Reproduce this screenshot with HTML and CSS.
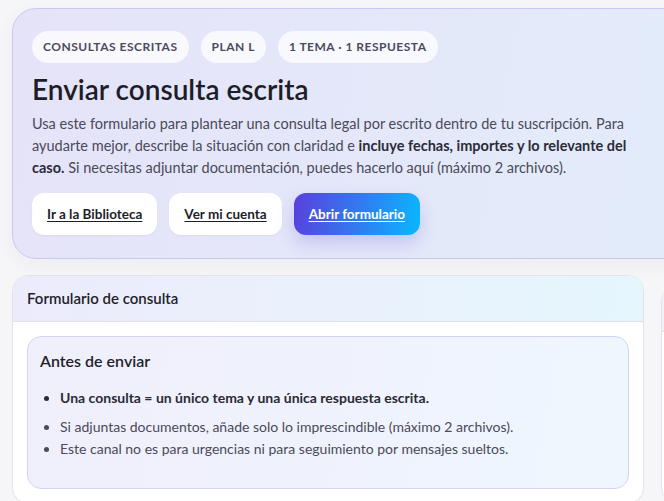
FILE: index.html
```html
<!DOCTYPE html>
<html lang="es">
<head>
    <meta charset="UTF-8">
    <meta name="viewport" content="width=device-width, initial-scale=1.0">
    <title>Enviar consulta escrita</title>
    <link rel="stylesheet" href="styles.css">
</head>
<body>
    <div class="page">
        <section class="hero">
            <div class="chips">
                <span class="chip">Consultas escritas</span>
                <span class="chip">Plan L</span>
                <span class="chip">1 tema · 1 respuesta</span>
            </div>
            <h1>Enviar consulta escrita</h1>
            <p class="intro">
                Usa este formulario para plantear una consulta legal por escrito dentro de tu suscripción. Para
                ayudarte mejor, describe la situación con claridad e <strong>incluye fechas, importes y lo relevante del
                caso.</strong> Si necesitas adjuntar documentación, puedes hacerlo aquí (máximo 2 archivos).
            </p>
            <div class="actions">
                <a class="btn" href="#">Ir a la Biblioteca</a>
                <a class="btn" href="#">Ver mi cuenta</a>
                <a class="btn btn-primary" href="#">Abrir formulario</a>
            </div>
        </section>

        <div class="columns">
            <section class="card">
                <div class="card-head">Formulario de consulta</div>
                <div class="card-body">
                    <div class="notice">
                        <h2>Antes de enviar</h2>
                        <ul>
                            <li class="key">Una consulta = un único tema y una única respuesta escrita.</li>
                            <li>Si adjuntas documentos, añade solo lo imprescindible (máximo 2 archivos).</li>
                            <li>Este canal no es para urgencias ni para seguimiento por mensajes sueltos.</li>
                        </ul>
                    </div>
                </div>
            </section>
            <!-- side column, only its edge shows at this width -->
            <aside class="card side">
                <div class="card-head"></div>
            </aside>
        </div>
    </div>
</body>
</html>
```

FILE: styles.css
```css
html, body {
    overflow: hidden;
}
body {
    margin: 0;
    font-family: Lato, "Noto Sans", sans-serif;
    background-color: #f6f6f8;
    color: #1f1f2b;
}
.page {
    width: 1000px;
    padding: 8px 12px;
}

/* hero */
.hero {
    padding: 22px 20px 23px 19px;
    border: 1px solid #cbc8f1;
    border-radius: 24px;
    background: linear-gradient(100deg, #e5e3f8 0%, #e3ebfa 60%, #e4eefb 100%);
    box-shadow: 0 6px 18px rgba(90, 80, 160, 0.06);
}
.chips {
    display: flex;
    gap: 12px;
}
.chip {
    padding: 0 11px;
    height: 32px;
    line-height: 32px;
    border-radius: 16px;
    background-color: rgba(255, 255, 255, 0.75);
    font-size: 12px;
    font-weight: 700;
    letter-spacing: 0.5px;
    text-transform: uppercase;
    color: #4b4b5c;
}
.hero h1 {
    margin: 8px 0 6px;
    font-size: 28px;
    font-weight: 600;
    line-height: 36px;
    color: #1d1d28;
}
.intro {
    max-width: 600px;
    margin: 0;
    font-size: 14.5px;
    line-height: 22px;
    color: #4a4a58;
}
.intro strong {
    color: #2c2c38;
}
.actions {
    display: flex;
    gap: 12px;
    margin-top: 14px;
}
.btn {
    display: inline-block;
    padding: 0 15px;
    height: 42px;
    line-height: 42px;
    border-radius: 12px;
    background-color: #fff;
    font-size: 13.5px;
    font-weight: 700;
    color: #1e1e2a;
    text-decoration: underline;
    text-underline-offset: 2px;
    box-shadow: 0 1px 2px rgba(40, 40, 80, 0.05);
}
.btn-primary {
    background: linear-gradient(100deg, #5a3fdc 0%, #2f7ff0 55%, #08b8ff 100%);
    color: #fff;
    box-shadow: 0 8px 18px rgba(80, 70, 210, 0.22);
}

/* lower columns */
.columns {
    display: grid;
    grid-template-columns: 632px 1fr;
    gap: 17px;
    margin-top: 16px;
}
.card {
    border: 1px solid #e2e2ec;
    border-radius: 16px;
    background-color: #fff;
    overflow: hidden;
}
.side {
    margin-top: 10px;
}
.card-head {
    padding: 0 14px;
    height: 45px;
    line-height: 45px;
    border-bottom: 1px solid #e0e0ee;
    background: linear-gradient(100deg, #ecebfb 0%, #e9f2fc 60%, #e5f6fd 100%);
    font-size: 15px;
    font-weight: 600;
    color: #1f1f2b;
}
.side .card-head {
    background: #f1f1f6;
}
.card-body {
    padding: 14px 14px;
}
.notice {
    padding: 14px 12px 28px;
    border: 1px solid #d6d2f2;
    border-radius: 14px;
    background: linear-gradient(100deg, #f0effc 0%, #eff3fd 60%, #eef7fe 100%);
}
.notice h2 {
    margin: 0 0 17px;
    font-size: 16px;
    font-weight: 600;
}
.notice ul {
    margin: 0;
    padding-left: 20px;
    font-size: 14px;
    line-height: 22px;
    color: #4a4a58;
}
.notice li.key {
    margin-bottom: 7px;
    font-weight: 700;
    color: #2a2a36;
}
```
